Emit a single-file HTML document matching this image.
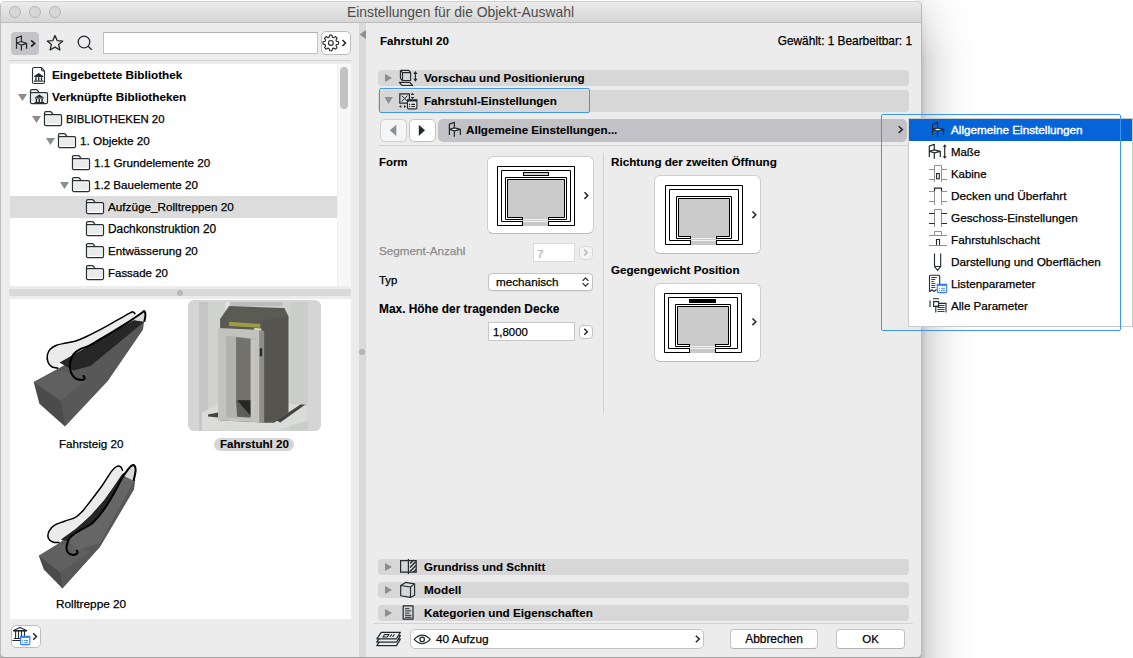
<!DOCTYPE html>
<html><head><meta charset="utf-8">
<style>
*{margin:0;padding:0;box-sizing:border-box}
html,body{width:1133px;height:658px;overflow:hidden;background:#fff;font-family:"Liberation Sans",sans-serif;color:#111}
.a{position:absolute}
.t{position:absolute;white-space:nowrap;font-size:11.7px;line-height:14px;-webkit-text-stroke:0.25px currentColor;color:#000}
.b{font-weight:bold;font-size:11.6px;-webkit-text-stroke:0.1px currentColor}
#shadow{position:absolute;left:915px;top:0;width:218px;height:658px;background:linear-gradient(to right,rgba(0,0,0,0.25),rgba(0,0,0,0.25) 6px,rgba(0,0,0,0.15) 12px,rgba(0,0,0,0.07) 26px,rgba(0,0,0,0.025) 42px,rgba(0,0,0,0) 62px);-webkit-mask-image:linear-gradient(to bottom,rgba(0,0,0,0.25),#000 60px)}
#win{position:absolute;left:0;top:0.5px;width:922px;height:657.5px;background:#ececec;border-radius:5px;overflow:hidden;border:1px solid #bdbdbd;border-top-color:#d2d2d2;border-bottom-color:#a2a2a2;border-right-color:#b8b8b8}
#root{position:absolute;left:0;top:0;width:1133px;height:658px}
#titlebar{position:absolute;left:0;top:0;width:921px;height:21px;background:linear-gradient(#ebebeb,#d6d6d6);border-bottom:1px solid #bcbcbc}
.tl{position:absolute;top:5px;width:12px;height:12px;border-radius:50%;background:#d7d7d7;border:1px solid #b6b6b6}
#title{position:absolute;left:0;width:921px;top:4px;text-align:center;font-size:13.8px;color:#4d4d4d;line-height:16px}
svg{position:absolute;overflow:visible}
.imgbtn{background:#fff;border:1px solid #cfcfcf;border-bottom-color:#bdbdbd;border-radius:6px}
.btn{background:#fff;border:1px solid #c3c3c3;border-bottom-color:#b3b3b3;border-radius:4px}
.bar{position:absolute;left:378px;width:531px;height:16px;background:#d7d7d7;border-radius:4px}
</style></head><body>
<div id="shadow"></div><div class="a" style="left:0;top:654px;width:921px;height:4px;background:#b0b0b0"></div>
<div id="win">
  <div id="titlebar"></div>
</div>
<div id="root">
  
  <div class="tl" style="left:8.5px;top:6px"></div>
  <div class="tl" style="left:28.7px;top:6px"></div>
  <div class="tl" style="left:48.9px;top:6px"></div>
  <div id="title" style="font-size:13.90px">Einstellungen für die Objekt-Auswahl</div>
<!--LEFT-->
  <!-- toolbar -->
  <div class="a" style="left:11px;top:32px;width:28px;height:23px;background:#c5c5c9;border-radius:4px"></div>
  <svg style="left:0;top:0" width="1" height="1">
    <g fill="none" stroke="#23292d" stroke-width="1.25" stroke-linejoin="round">
      <path d="M16.5 48.7V37.8L21.4 36V41.5 M16.5 43L21.4 41.5L26.6 43.3L21.4 45.2Z M21.4 45.2V50.6 M26.6 43.3V48.8"/>
    </g>
    <path d="M31.1 40.4L34.6 43.4L31.1 46.5" fill="none" stroke="#1f2326" stroke-width="1.7"/>
    <path d="M55 35.5L57.3 40.7L62.8 41.1L58.6 44.6L59.9 50L55 47.1L50.1 50L51.4 44.6L47.2 41.1L52.7 40.7Z" fill="none" stroke="#23292d" stroke-width="1.3" stroke-linejoin="round"/>
    <circle cx="84" cy="42" r="5.8" fill="none" stroke="#23292d" stroke-width="1.25"/>
    <path d="M88.2 46.2L91.8 49.8" stroke="#23292d" stroke-width="1.3"/>
  </svg>
  <div class="a" style="left:103px;top:32px;width:215px;height:22px;background:#fff;border:1px solid #c3c3c3;border-top-color:#b0b0b0"></div>
  <div class="a" style="left:321px;top:31px;width:30px;height:24px;background:#fff;border:1px solid #bdbdbd;border-radius:5px"></div>
  <svg style="left:0;top:0" width="1" height="1">
    <path d="M336.45 41.19 L338.62 41.81 L338.62 43.99 L336.45 44.61 L336.00 45.68 L337.10 47.66 L335.56 49.20 L333.58 48.10 L332.51 48.55 L331.89 50.72 L329.71 50.72 L329.09 48.55 L328.02 48.10 L326.04 49.20 L324.50 47.66 L325.60 45.68 L325.15 44.61 L322.98 43.99 L322.98 41.81 L325.15 41.19 L325.60 40.12 L324.50 38.14 L326.04 36.60 L328.02 37.70 L329.09 37.25 L329.71 35.08 L331.89 35.08 L332.51 37.25 L333.58 37.70 L335.56 36.60 L337.10 38.14 L336.00 40.12Z" fill="none" stroke="#2a2f33" stroke-width="1.15" stroke-linejoin="round"/><circle cx="330.8" cy="42.9" r="2.4" fill="none" stroke="#2a2f33" stroke-width="1.15"/>
    <path d="M342.5 40L345.5 43L342.5 46" fill="none" stroke="#1f2326" stroke-width="1.5"/>
  </svg>
  <div class="a" style="left:9px;top:60px;width:342px;height:1px;background:#d3d3d3"></div>
  <!-- list -->
  <div class="a" style="left:10px;top:64px;width:327px;height:222px;background:#fff"></div>
  <div class="a" style="left:337px;top:64px;width:14px;height:222px;background:#f7f7f7;border-left:1px solid #efefef"></div>
  <div class="a" style="left:340px;top:67px;width:8px;height:42px;background:#c2c2c2;border-radius:4px"></div>
  <div class="a" style="left:10px;top:196px;width:327px;height:22px;background:#dcdcdc"></div>
  <!--TREE-->
<svg style="left:0;top:0" width="1" height="1"><defs><g id="folder"><path d="M0.5 14V2Q0.5 0.5 2 0.5H6.2Q7 0.5 7.6 1.3L9 3.5H16.3Q17.5 3.5 17.5 5V13.3Q17.5 14.5 16.3 14.5H1.7Q0.5 14.5 0.5 13.3Z M0.5 3.5H9" fill="#fff" stroke="#263035" stroke-width="1.25"/><rect x="2.2" y="5.2" width="13.6" height="7.6" fill="#eaeaea"/></g><g id="bank" fill="#23292d"><path d="M0 3L4.5 0L9 3Z"/><rect x="0" y="3" width="9" height="1"/><rect x="1" y="4.2" width="1.4" height="3.3"/><rect x="3.8" y="4.2" width="1.4" height="3.3"/><rect x="6.6" y="4.2" width="1.4" height="3.3"/><rect x="-0.3" y="7.5" width="9.6" height="1.2"/></g></defs>
<path d="M32.5 68.5V82Q32.5 83.5 34 83.5H43Q44.5 83.5 44.5 82V71L41.5 67.5H34Q32.5 67.5 32.5 69Z M41.5 67.5V69.5Q41.5 71 43 71H44.5" fill="#fff" stroke="#2b3236" stroke-width="1.1"/><use href="#bank" x="34.2" y="73"/>
<path d="M18 94H27L22.5 101Z" fill="#8c8c8c"/>
<use href="#folder" x="30" y="89"/><use href="#bank" x="34.8" y="94.5"/>
<path d="M32 116H41L36.5 123Z" fill="#8c8c8c"/>
<use href="#folder" x="44" y="111"/>
<path d="M46 138H55L50.5 145Z" fill="#8c8c8c"/>
<use href="#folder" x="58" y="133"/>
<use href="#folder" x="72" y="155"/>
<path d="M60 182H69L64.5 189Z" fill="#8c8c8c"/>
<use href="#folder" x="72" y="177"/>
<use href="#folder" x="86" y="199"/>
<use href="#folder" x="86" y="221"/>
<use href="#folder" x="86" y="243"/>
<use href="#folder" x="86" y="265"/>
</svg>
<div class="t b" style="font-size:11.73px;left:52px;top:68px">Eingebettete Bibliothek</div>
<div class="t b" style="font-size:11.72px;left:52px;top:90px">Verknüpfte Bibliotheken</div>
<div class="t" style="font-size:11.37px;left:66px;top:112px">BIBLIOTHEKEN 20</div>
<div class="t" style="font-size:11.74px;left:80px;top:134px">1. Objekte 20</div>
<div class="t" style="font-size:11.69px;left:94px;top:156px">1.1 Grundelemente 20</div>
<div class="t" style="font-size:11.61px;left:94px;top:178px">1.2 Bauelemente 20</div>
<div class="t" style="font-size:11.73px;left:108px;top:200px">Aufzüge_Rolltreppen 20</div>
<div class="t" style="font-size:11.86px;left:108px;top:222px">Dachkonstruktion 20</div>
<div class="t" style="font-size:11.64px;left:108px;top:244px">Entwässerung 20</div>
<div class="t" style="font-size:11.48px;left:108px;top:266px">Fassade 20</div>
<!--/TREE-->
  <!-- splitter -->
  <div class="a" style="left:9px;top:289px;width:342px;height:7px;background:#d9d9d9"></div>
  <div class="a" style="left:177px;top:289.5px;width:6px;height:6px;border-radius:50%;background:#b9b9b9"></div>
  <div class="a" style="left:10px;top:299px;width:341px;height:320px;background:#fff"></div>
  <div class="a" style="left:351px;top:299px;width:8px;height:320px;background:#ececec"></div>
<!--THUMBS-->
<svg style="left:0;top:0" width="1" height="1">
 <!-- Fahrsteig -->
<g><path d="M33.7 381.9 L58.4 368.6 L142.0 320.6 L144.3 320.6 L142.9 329.7 L107.8 381.0 L65.0 426.6Z" fill="#585858"/>
<path d="M33.7 381.9 L61.2 400.9 L65.0 426.6 L39.4 403.8Z" fill="#4b4b4b"/>
<path d="M33.7 381.9 L58.4 369.6 L85.0 380.0 L61.2 400.9Z" fill="#606060"/>
<path d="M59.3 362.4 L134.4 319.8 L144.3 321.7 L90.7 365.8 L73.6 370.5Z" fill="#262626"/>
<path d="M135.33 314.12 C135.02 313.80 134.22 312.47 133.43 312.22 C132.64 311.97 133.59 311.11 130.58 312.60 C127.58 314.09 120.45 318.30 115.39 321.15 C110.32 324.00 105.25 327.00 100.19 329.70 C95.12 332.39 88.95 335.46 84.99 337.29 C81.03 339.13 79.61 339.76 76.44 340.71 C73.28 341.66 69.32 342.23 65.99 342.99 C62.67 343.75 59.09 344.26 56.50 345.27 C53.90 346.29 51.94 347.49 50.42 349.07 C48.90 350.66 47.79 352.62 47.38 354.77 C46.97 356.93 47.22 360.00 47.95 361.99 C48.68 363.99 50.00 365.70 51.75 366.74 C53.49 367.78 57.29 368.01 58.40 368.26 L59.3 362.4 L134.4 319.8Z" fill="#ebebeb"/>
<path d="M134.4 320.2 L141.6 313.0 L144.3 311.1 L145.4 315.4 L144.3 321.7Z" fill="#d9d9d9"/>
<path d="M58.40 368.26 C57.29 368.01 53.49 367.78 51.75 366.74 C50.00 365.70 48.68 363.99 47.95 361.99 C47.22 360.00 46.97 356.93 47.38 354.77 C47.79 352.62 48.90 350.66 50.42 349.07 C51.94 347.49 53.90 346.29 56.50 345.27 C59.09 344.26 62.67 343.75 65.99 342.99 C69.32 342.23 73.28 341.66 76.44 340.71 C79.61 339.76 81.03 339.13 84.99 337.29 C88.95 335.46 95.12 332.39 100.19 329.70 C105.25 327.00 110.32 324.00 115.39 321.15 C120.45 318.30 127.58 314.09 130.58 312.60 C133.59 311.11 132.64 311.97 133.43 312.22 C134.22 312.47 135.02 313.80 135.33 314.12" fill="none" stroke="#000" stroke-width="1.5"/>
<path d="M144.26 321.72 C144.45 320.67 145.40 317.22 145.40 315.45 C145.40 313.68 144.89 311.49 144.26 311.08 C143.63 310.67 143.88 311.40 141.60 312.98 C139.32 314.56 134.95 317.73 130.58 320.58 C126.21 323.43 120.45 326.97 115.39 330.08 C110.32 333.18 104.62 336.57 100.19 339.19 C95.76 341.82 92.11 344.20 88.79 345.84 C85.47 347.49 82.77 347.71 80.24 349.07 C77.71 350.43 75.27 351.86 73.59 354.01 C71.91 356.17 70.65 359.08 70.17 361.99 C69.70 364.90 69.92 368.80 70.74 371.49 C71.57 374.18 73.21 376.71 75.11 378.14 C77.01 379.56 80.56 380.04 82.14 380.04 C83.72 380.04 84.45 378.93 84.61 378.14 C84.77 377.35 83.34 375.76 83.09 375.29" fill="none" stroke="#000" stroke-width="2"/></g>
 <!-- Rolltreppe -->
<g><path d="M38.8 555.8 L59.6 543.0 L131.6 478.8 L135.2 480.2 L134.0 489.6 L100.0 546.9 L62.5 588.4Z" fill="#585858"/>
<path d="M38.8 555.8 L60.5 572.6 L62.5 588.4 L43.8 569.6Z" fill="#4b4b4b"/>
<path d="M38.8 555.8 L59.6 543.0 L90.2 551.8 L60.5 572.6Z" fill="#606060"/>
<path d="M67.5 541.0 L70.4 537.0 L80.3 530.1 L92.1 523.2 L104.0 509.4 L113.9 493.6 L122.7 478.8 L128.7 469.9 L134.0 480.8 L100.0 543.0 L77.3 549.9Z" fill="#666666"/>
<path d="M60.5 539.4 L76.3 528.2 L90.2 515.7 L104.0 499.9 L113.9 486.1 L121.8 474.2 L128.7 469.9 L122.7 478.8 L113.9 493.6 L104.0 509.4 L92.1 523.2 L80.3 530.1 L70.4 537.0 L67.5 541.0Z" fill="#262626"/>
<path d="M122.75 470.89 C122.42 470.23 121.76 467.69 120.77 466.94 C119.79 466.18 118.31 465.69 116.82 466.34 C115.34 467.00 114.36 467.66 111.89 470.89 C109.42 474.11 105.63 480.60 102.01 485.70 C98.39 490.80 93.46 497.22 90.17 501.49 C86.87 505.77 84.74 508.74 82.27 511.37 C79.80 514.00 78.32 515.65 75.36 517.29 C72.39 518.94 67.95 519.93 64.49 521.24 C61.04 522.56 57.19 523.55 54.62 525.19 C52.05 526.84 50.14 528.98 49.09 531.12 C48.04 533.25 47.71 536.22 48.30 538.03 C48.89 539.84 50.77 541.22 52.65 541.98 C54.52 542.73 58.41 542.47 59.56 542.57 L59.6 542.6 L60.5 539.4 L76.3 528.2 L90.2 515.7 L104.0 499.9 L113.9 486.1 L121.8 474.2Z" fill="#ebebeb"/>
<path d="M123.7 475.8 L127.7 469.9 L131.6 465.6 L135.6 470.9 L133.6 480.8Z" fill="#d9d9d9"/>
<path d="M59.56 542.57 C58.41 542.47 54.52 542.73 52.65 541.98 C50.77 541.22 48.89 539.84 48.30 538.03 C47.71 536.22 48.04 533.25 49.09 531.12 C50.14 528.98 52.05 526.84 54.62 525.19 C57.19 523.55 61.04 522.56 64.49 521.24 C67.95 519.93 72.39 518.94 75.36 517.29 C78.32 515.65 79.80 514.00 82.27 511.37 C84.74 508.74 86.87 505.77 90.17 501.49 C93.46 497.22 98.39 490.80 102.01 485.70 C105.63 480.60 109.42 474.11 111.89 470.89 C114.36 467.66 115.34 467.00 116.82 466.34 C118.31 465.69 119.79 466.18 120.77 466.94 C121.76 467.69 122.42 470.23 122.75 470.89" fill="none" stroke="#000" stroke-width="1.5"/>
<path d="M133.61 480.76 C133.94 479.11 135.42 473.35 135.58 470.89 C135.75 468.42 135.26 466.84 134.60 465.95 C133.94 465.06 132.79 464.90 131.64 465.55 C130.48 466.21 129.33 467.69 127.69 469.90 C126.04 472.10 124.07 474.84 121.76 478.79 C119.46 482.73 116.82 488.49 113.86 493.60 C110.90 498.70 107.61 504.46 103.99 509.39 C100.37 514.33 96.09 519.76 92.14 523.22 C88.19 526.67 83.91 527.82 80.29 530.13 C76.67 532.43 72.66 534.57 70.42 537.04 C68.18 539.51 67.36 542.47 66.86 544.94 C66.37 547.41 66.54 550.20 67.46 551.85 C68.38 553.50 70.75 554.58 72.39 554.81 C74.04 555.04 76.61 554.06 77.33 553.23 C78.05 552.41 76.84 550.43 76.74 549.88" fill="none" stroke="#000" stroke-width="2"/></g>
</svg>
<!-- Fahrstuhl photo -->
<div class="a" style="left:188px;top:300px;width:133px;height:131px;background:#d5d5d5;border-radius:6px"></div>
<svg style="left:0;top:0" width="1" height="1">
<rect x="199" y="302" width="109" height="128.5" fill="#cfd2cf"/>
<path d="M199.0 302.0 L208.0 302.0 L208.0 430.4 L199.0 430.4Z" fill="#c4c7c4"/>
<path d="M225.1 302.0 L230.1 302.0 L230.1 430.4 L225.1 430.4Z" fill="#dfe2df"/>
<path d="M290.3 302.0 L307.4 302.0 L307.4 430.4 L290.3 430.4Z" fill="#cacdca"/>
<path d="M230.1 302.0 L282.3 302.0 L282.3 306.0 L230.1 306.0Z" fill="#babdba"/>
<path d="M202.0 412.4 L218.1 404.4 L290.3 403.4 L307.4 406.4 L307.4 420.4 L276.3 430.4 L202.0 430.4Z" fill="#dadcda"/>
<path d="M208.0 414.4 L218.1 412.4 L218.1 417.4 L208.0 416.4Z" fill="#444"/>
<path d="M276.3 420.4 L300.4 404.4 L305.4 404.4 L280.3 422.4Z" fill="#444"/>
<path d="M220.1 319.1 L229.1 306.0 L284.3 308.0 L288.3 316.1 L288.3 412.4 L274.3 422.4 L262.2 422.4 L220.1 420.4Z" fill="#5b5a53"/>
<path d="M262.2 320.1 L288.3 316.1 L288.3 412.4 L274.3 422.4 L262.2 422.4Z" fill="#55544e"/>
<path d="M229.1 321.7 L260.2 324.1 L260.2 327.7 L229.1 326.1Z" fill="#9a9d42"/>
<path d="M254.2 328.1 L261.2 328.5 L261.2 331.1 L254.2 330.7Z" fill="#e0e0c8"/>
<path d="M218.1 328.1 L262.2 330.1 L263.2 422.4 L218.1 420.4Z" fill="#c2c2be"/>
<path d="M259.2 330.1 L264.2 331.1 L264.2 422.4 L259.2 422.4Z" fill="#8e8d88"/>
<path d="M226.1 335.7 L256.2 338.5 L256.2 418.4 L226.1 417.4Z" fill="#b2b2ae"/>
<path d="M236.1 337.1 L251.2 339.1 L251.2 400.3 L236.1 400.3Z" fill="#73716b"/>
<path d="M236.1 400.3 L251.2 400.3 L251.2 417.4 L237.1 416.8Z" fill="#5e5d59"/>
<path d="M237.1 400.3 L251.2 400.3 L251.2 416.4Z" fill="#262626"/>
<path d="M250.6 339.1 L255.8 339.7 L255.8 418.4 L250.6 418.0Z" fill="#c4c4c0"/>
<path d="M259.8 348.2 L262.2 348.2 L262.2 356.2 L259.8 356.2Z" fill="#2a2a2a"/>
</svg>
<div class="t b" style="left:214px;top:438px;width:80px;height:13px;background:#d5d5d5;border-radius:7px"></div>
<div class="t b" style="font-size:11.58px;left:220px;top:437px">Fahrstuhl 20</div>
<div class="t" style="font-size:11.59px;left:59px;top:437px">Fahrsteig 20</div>
<div class="t" style="font-size:11.80px;left:56px;top:597px">Rolltreppe 20</div>
<!--/THUMBS-->
  <!-- vertical splitter -->
  <div class="a" style="left:359px;top:23px;width:7px;height:634px;background:#d9d9d9"></div>
  <svg style="left:0;top:0" width="1" height="1"><path d="M359.5 34.5L366 30V39Z" fill="#8e8e8e"/></svg>
  <div class="a" style="left:359px;top:349px;width:6px;height:6px;border-radius:50%;background:#bababa;border:0.5px solid #aaa"></div>
  <!-- bottom lib button -->
  <div class="a" style="left:11px;top:624.5px;width:30px;height:23px;background:#fff;border:1px solid #bdbdbd;border-radius:5px"></div>
<!--RIGHT-->
  <div class="t b" style="font-size:11.58px;left:380px;top:34px">Fahrstuhl 20</div>
  <div class="t" style="font-size:11.85px;left:777px;top:34px;width:135px;text-align:right">Gewählt: 1 Bearbeitbar: 1</div>
  <!-- section bars -->
  <div class="bar" style="top:70px;height:16px"></div>
  <div class="bar" style="top:90px;height:22px"></div>
  <div class="a" style="left:379px;top:88px;width:211px;height:25px;border:1.5px solid #3d95f7;border-radius:2px"></div>
  <svg style="left:0;top:0" width="1" height="1">
    <path d="M385 74V82L392 78Z" fill="#8e8e8e"/>
    <path d="M384.5 97H392.8L388.6 104Z" fill="#8e8e8e"/>
  </svg>
  <div class="t b" style="font-size:11.58px;left:424px;top:71px">Vorschau und Positionierung</div>
  <div class="t b" style="font-size:11.62px;left:424px;top:94px">Fahrstuhl-Einstellungen</div>
  <!-- nav -->
  <div class="a" style="left:379.5px;top:118.5px;width:27.5px;height:23px;background:#f5f5f5;border:1px solid #d0d0d0;border-radius:5px"></div>
  <div class="a" style="left:408.5px;top:118.5px;width:27.6px;height:23px;background:#fff;border:1px solid #c2c2c2;border-radius:5px"></div>
  <svg style="left:0;top:0" width="1" height="1">
    <path d="M396.3 124.8V135.9L389.8 130.35Z" fill="#8a8e90"/>
    <path d="M418.8 124.8V135.9L425 130.35Z" fill="#23292d"/>
  </svg>
  <div class="a" style="left:438px;top:119px;width:469px;height:23px;background:#c2c2c6;border-radius:5px"></div>
  <div class="t b" style="font-size:11.65px;left:466px;top:123px">Allgemeine Einstellungen...</div>
  <svg style="left:0;top:0" width="1" height="1"><path d="M898.8 126.3L902.3 129.6L898.8 132.9" fill="none" stroke="#23292d" stroke-width="1.5"/></svg>
  <div class="a" style="left:379px;top:145px;width:530px;height:1px;background:#d2d2d2"></div>
  <!-- column separator -->
  <div class="a" style="left:603px;top:153px;width:1px;height:260px;background:#d2d2d2"></div>
  <!-- Form -->
  <div class="t b" style="font-size:11.42px;left:379px;top:155px">Form</div>
  <div class="a imgbtn" style="left:487px;top:156px;width:107px;height:78px"></div>
  <div class="t" style="font-size:11.69px;left:379px;top:244px;color:#8b8b8b">Segment-Anzahl</div>
  <div class="a" style="left:533px;top:243px;width:42px;height:19px;background:#fff;border:1px solid #dadada"></div>
  <div class="t" style="left:537px;top:247px;color:#b5b5b5">7</div>
  <div class="a" style="left:578.5px;top:245.5px;width:14px;height:14px;background:#f4f4f4;border:1px solid #d9d9d9;border-radius:4px"></div>
  <div class="t" style="font-size:11.40px;left:379px;top:273px">Typ</div>
  <div class="a" style="left:488px;top:273px;width:105px;height:18px;background:#fff;border:1px solid #c3c3c3;border-radius:4px;box-shadow:0 0.5px 0.5px rgba(0,0,0,0.1)"></div>
  <div class="t" style="font-size:11.71px;left:496px;top:275px">mechanisch</div>
  <div class="t b" style="font-size:11.90px;left:379px;top:302px">Max. Höhe der tragenden Decke</div>
  <div class="a" style="left:488px;top:322px;width:87px;height:19px;background:#fff;border:1px solid #c6c6c6"></div>
  <div class="t" style="font-size:11.40px;left:493px;top:325px">1,8000</div>
  <div class="a" style="left:578.5px;top:325px;width:14px;height:14px;background:#fff;border:1px solid #c3c3c3;border-radius:4px"></div>
  <!-- right column -->
  <div class="t b" style="font-size:11.67px;left:611px;top:155px">Richtung der zweiten Öffnung</div>
  <div class="a imgbtn" style="left:654px;top:175px;width:107px;height:79px"></div>
  <div class="t b" style="font-size:11.64px;left:611px;top:263px">Gegengewicht Position</div>
  <div class="a imgbtn" style="left:654px;top:283px;width:107px;height:79px"></div>
  <!-- bottom bars -->
  <div class="bar" style="top:559px;height:16px"></div>
  <div class="bar" style="top:582px;height:16px"></div>
  <div class="bar" style="top:605px;height:16px"></div>
  <svg style="left:0;top:0" width="1" height="1">
    <path d="M385 563V571L392 567Z" fill="#8e8e8e"/>
    <path d="M385 586V594L392 590Z" fill="#8e8e8e"/>
    <path d="M385 609V617L392 613Z" fill="#8e8e8e"/>
  </svg>
  <div class="t b" style="font-size:11.49px;left:424px;top:560px">Grundriss und Schnitt</div>
  <div class="t b" style="font-size:11.79px;left:424px;top:583px">Modell</div>
  <div class="t b" style="font-size:11.69px;left:424px;top:606px">Kategorien und Eigenschaften</div>
  <div class="a" style="left:374px;top:623px;width:539px;height:1px;background:#d2d2d2"></div>
  <!-- footer -->
  <div class="a" style="left:410px;top:629px;width:294px;height:20px;background:#fff;border:1px solid #c3c3c3;border-radius:5px"></div>
  <div class="t" style="font-size:11.82px;left:436px;top:632px">40 Aufzug</div>
  <svg style="left:0;top:0" width="1" height="1"><path d="M695.8 635.7L699.3 639L695.8 642.3" fill="none" stroke="#23292d" stroke-width="1.5"/></svg>
  <div class="a btn" style="left:730px;top:629px;width:88px;height:20px"></div>
  <div class="t" style="font-size:11.92px;left:730px;top:632px;width:88px;text-align:center">Abbrechen</div>
  <div class="a btn" style="left:836px;top:629px;width:69px;height:20px"></div>
  <div class="t" style="font-size:11.40px;left:836px;top:632px;width:69px;text-align:center">OK</div>
<!--ICONS-->
<svg style="left:0;top:0" width="1" height="1">
 <defs>
  <g id="chair" fill="none" stroke="#23292d" stroke-width="1.2" stroke-linejoin="round">
   <path d="M0 12.7V1.8L5 0V5.8 M0 7L5 5.6L11 7L5 8.6Z M5 8.6V14.4 M11 7V12.6"/>
  </g>
 </defs>
 <!-- Vorschau icon -->
 <g fill="none" stroke="#23292d" stroke-width="1.15" stroke-linejoin="round">
  <path d="M402.5 72.6H410.6V80.5H402.5Z M400.4 70.4H408.8L410.6 72.6 M400.4 70.4V78.6L402.5 80.5 M400.4 70.4L402.5 72.6"/>
  <path d="M399.3 82.4H409.7L412.6 85.5H402.1Z"/>
  <path d="M415.4 72.5V80.5"/>
 </g>
 <path d="M413.3 74L415.4 71L417.5 74Z M413.3 78.8L415.4 81.8L417.5 78.8Z" fill="#23292d"/>
 <!-- Fahrstuhl-Einstellungen icon -->
 <g fill="none" stroke="#23292d" stroke-width="1.2">
  <path d="M399.8 93.8H409.4V103.2H399.8Z"/>
  <path d="M401.7 95.7L407.5 101.3 M407.5 95.7L401.7 101.3" stroke-width="1"/>
 </g>
 <path d="M407.5 99.9H416.9V107.8Q416.9 108.8 415.9 108.8H408.5Q407.5 108.8 407.5 107.8Z" fill="#e8e8e8" stroke="#23292d" stroke-width="1.15"/>
 <rect x="407.5" y="99.8" width="9.4" height="1.7" fill="#23292d"/>
 <path d="M409 104.4h1.2 M411.3 104.4h3.7 M409 106.5h1.2 M411.3 106.5h3.7" stroke="#23292d" stroke-width="1.1"/>
 <path d="M410.7 95L412.5 92.8L414.3 95Z M410.7 97L412.5 99.2L414.3 97Z M401.3 104.9V108L399 106.45Z M404 104.9V108L406.3 106.45Z" fill="#23292d"/>
 <!-- popup chair -->
 <path d="M449.4 129.3L454.6 128.2L460.6 129.3L454.6 130.8Z" fill="#fff"/>
 <use href="#chair" x="449.4" y="122.3"/>
 <!-- Grundriss icon -->
 <path d="M410.2 563.5L413.8 559.9 M410 567.5L416 561.5 M410 571.5L416 565.5 M413.5 572L416 569.5" stroke="#23292d" stroke-width="1.3"/>
 <g fill="none" stroke="#23292d" stroke-width="1.2">
  <path d="M400.6 560.6H416.2V572.2H400.6Z"/>
  <path d="M408.4 559V574"/>
 </g>
 <!-- Modell icon -->
 <g fill="none" stroke="#23292d" stroke-width="1.15" stroke-linejoin="round">
  <path d="M400.7 585.5L405.8 582.4L414.6 583.9V595.3L410.5 597.4L400.7 595.8Z M400.7 585.5L410.5 587L414.6 583.9 M410.5 587V597.4"/>
 </g>
 <!-- Kategorien icon -->
 <path d="M403.2 605.8H413V619.2H403.2Z" fill="none" stroke="#23292d" stroke-width="1.2" stroke-linejoin="round"/>
 <path d="M405 608.7h4.5 M405 610.9h6.3 M405 613.1h4.5 M405 615.3h6.3 M405 617.3h6.3" stroke="#23292d" stroke-width="1"/>
 <!-- layers icon -->
 <g fill="#ececec" stroke="#23292d" stroke-width="1.25" stroke-linejoin="round">
  <path d="M376.8 645.6L381.3 639H400.4L396.5 645.6Z"/>
  <path d="M376.8 642.2L381.3 635.6H400.4L396.5 642.2Z"/>
  <path d="M376.8 638.8L381.3 632.3H400.4L396.5 638.8Z"/>
 </g>
 <path d="M383 637L384.6 634.5H388.8L387.2 637Z" fill="none" stroke="#23292d" stroke-width="1.1"/>
 <path d="M390 637L391.8 634.4 M392.6 637L394.4 634.4" stroke="#23292d" stroke-width="1.1"/>
 <!-- eye -->
 <path d="M414.2 639.4Q422.2 630.8 430.2 639.4Q422.2 648 414.2 639.4Z" fill="none" stroke="#23292d" stroke-width="1.1"/>
 <circle cx="422.2" cy="639.4" r="2.2" fill="none" stroke="#23292d" stroke-width="1.3"/>
 <!-- bottom lib button icon -->
 <path d="M13.5 630.6L20 627.4L26.6 630.6Z" fill="#fff" stroke="#23292d" stroke-width="1.1" stroke-linejoin="round"/>
 <path d="M13.2 630.8H26.8" stroke="#23292d" stroke-width="1.3"/>
 <path d="M15.6 631V638.3 M18.5 631V638.3 M21.5 631V636 M24.5 631V636" stroke="#23292d" stroke-width="1.1"/>
 <path d="M13.8 638.5H20.5 M12.3 640.5H20.5" stroke="#23292d" stroke-width="1.1"/>
 <path d="M20.6 636.3H29.8V643.8Q29.8 644.6 29 644.6H21.4Q20.6 644.6 20.6 643.8Z" fill="#fff" stroke="#2f7cf6" stroke-width="1.1"/>
 <rect x="20.6" y="636" width="9.2" height="1.9" fill="#2f7cf6"/>
 <path d="M22 640.5h0.9 M24.2 640.5h3.8 M22 642.6h0.9 M24.2 642.6h3.8" stroke="#2f7cf6" stroke-width="0.9"/>
 <path d="M33.2 633.3L36.5 636.5L33.2 639.7" fill="none" stroke="#23292d" stroke-width="1.5"/>
</svg>
<!--/ICONS-->
<!--DIAG-->
<svg style="left:0;top:0" width="1" height="1">
<path d="M522 225.5H497.5V166.5H574.5V225.5H549 M522 221.5H501.5V170.5H570.5V221.5H549" fill="none" stroke="#000" stroke-width="1"/><rect x="507" y="179" width="58" height="39" fill="#cbcbcb"/><rect x="522" y="217" width="27" height="9" fill="#c8c8c8"/><path d="M522 219.5H549 M522 221.5H549" stroke="#f4f4f4" stroke-width="1"/><path d="M522 219.5H505.5V177.5H566.5V219.5H549 M522 217.5H507.5V179.5H564.5V217.5H549" fill="none" stroke="#000" stroke-width="1"/><path d="M522.5 221V226 M548.5 221V226 M522.5 217V220 M548.5 217V220" stroke="#000" stroke-width="1"/><rect x="523.5" y="172.5" width="25" height="3" fill="#cdcdcd" stroke="#000" stroke-width="1"/>
<path d="M690 244.5H665.5V185.5H742.5V244.5H717 M690 240.5H669.5V189.5H738.5V240.5H717" fill="none" stroke="#000" stroke-width="1"/><rect x="678" y="198" width="52" height="39" fill="#cbcbcb"/><rect x="690" y="236" width="27" height="9" fill="#c8c8c8"/><path d="M690 238.5H717 M690 240.5H717" stroke="#f4f4f4" stroke-width="1"/><path d="M690 238.5H676.5V196.5H731.5V238.5H717 M690 236.5H678.5V198.5H729.5V236.5H717" fill="none" stroke="#000" stroke-width="1"/><path d="M690.5 240V245 M716.5 240V245 M690.5 236V239 M716.5 236V239" stroke="#000" stroke-width="1"/>
<path d="M689 352.5H664.5V293.5H741.5V352.5H716 M689 348.5H668.5V297.5H737.5V348.5H716" fill="none" stroke="#000" stroke-width="1"/><rect x="677" y="306" width="52" height="39" fill="#cbcbcb"/><rect x="689" y="344" width="27" height="9" fill="#c8c8c8"/><path d="M689 346.5H716 M689 348.5H716" stroke="#f4f4f4" stroke-width="1"/><path d="M689 346.5H675.5V304.5H730.5V346.5H716 M689 344.5H677.5V306.5H728.5V344.5H716" fill="none" stroke="#000" stroke-width="1"/><path d="M689.5 348V353 M715.5 348V353 M689.5 344V347 M715.5 344V347" stroke="#000" stroke-width="1"/><rect x="689" y="299" width="27" height="4" fill="#000"/>
<path d="M584.5 192.3L587.8 195.60000000000002L584.5 198.9" fill="none" stroke="#23292d" stroke-width="1.5"/>
<path d="M752.5 211.5L755.8 214.8L752.5 218.1" fill="none" stroke="#23292d" stroke-width="1.5"/>
<path d="M752.5 318.5L755.8 321.8L752.5 325.1" fill="none" stroke="#23292d" stroke-width="1.5"/>
<path d="M584.3 249.5L587.3 252.5L584.3 255.5" fill="none" stroke="#b0b0b0" stroke-width="1.3"/>
<path d="M584.3 328.8L587.3 331.8L584.3 334.8" fill="none" stroke="#23292d" stroke-width="1.5"/>
<path d="M582.6 280.8L585.5 277.9L588.4 280.8 M582.6 283.2L585.5 286.1L588.4 283.2" fill="none" stroke="#23292d" stroke-width="1.2"/>
</svg>
<!--/DIAG-->
<!--MENU-->
  <div class="a" style="left:908px;top:118px;width:225px;height:209px;background:#fff;border:1px solid #cacaca"></div>
  <div class="a" style="left:909px;top:119px;width:223px;height:22px;background:#0564d8"></div>
  <div class="t" style="font-size:11.73px;left:951px;top:123px;color:#fff;-webkit-text-stroke:0.4px #fff">Allgemeine Einstellungen</div>
  <div class="t" style="font-size:11.40px;left:951px;top:145px">Maße</div>
  <div class="t" style="font-size:11.40px;left:951px;top:167px">Kabine</div>
  <div class="t" style="font-size:11.81px;left:951px;top:189px">Decken und Überfahrt</div>
  <div class="t" style="font-size:11.78px;left:951px;top:211px">Geschoss-Einstellungen</div>
  <div class="t" style="font-size:11.70px;left:951px;top:233px">Fahrstuhlschacht</div>
  <div class="t" style="font-size:11.78px;left:951px;top:255px">Darstellung und Oberflächen</div>
  <div class="t" style="font-size:11.69px;left:951px;top:277px">Listenparameter</div>
  <div class="t" style="font-size:11.61px;left:951px;top:299px">Alle Parameter</div>
  <div class="a" style="left:881px;top:114px;width:240px;height:217px;border:1.5px solid #3d95f7;border-radius:2px"></div>
<svg style="left:0;top:0" width="1" height="1">
 <path d="M932.6 129.4L937.6 128.2L943.6 129.4L937.6 130.9Z" fill="#fff"/>
 <use href="#chair" x="932.6" y="122.4"/>
 <path d="M929.3 151.3L934.3 150.1L940.3 151.3L934.3 152.8Z" fill="#fff"/>
 <use href="#chair" x="929.3" y="144.3"/>
 <path d="M944.7 145.5V157.5" stroke="#23292d" stroke-width="1.2"/>
 <path d="M942.7 146.8L944.7 144.2L946.7 146.8Z M942.7 156.2L944.7 158.8L946.7 156.2Z" fill="#23292d"/>
 <!-- Kabine -->
 <g fill="none" stroke="#8f8f8f" stroke-width="1">
  <path d="M934.5 182V165.5H941.5V182 M929 169.5H934.5 M941.5 169.5H947 M929 179.5H934.5 M941.5 179.5H947"/>
 </g>
 <rect x="936.6" y="173.5" width="2.7" height="5.3" fill="none" stroke="#23292d" stroke-width="1.1"/>
 <!-- Decken -->
 <g fill="none" stroke="#8f8f8f" stroke-width="1">
  <path d="M934.5 190V205 M941.5 190V205 M929 191.5H934.5 M941.5 191.5H947 M929 201.5H934.5 M941.5 201.5H947"/>
 </g>
 <path d="M934.5 191V188.2H941.5V191" fill="none" stroke="#23292d" stroke-width="1.2"/>
 <!-- Geschoss -->
 <path d="M934.5 227V209.5H941.5V227" fill="none" stroke="#8f8f8f" stroke-width="1"/>
 <path d="M929 213.5H934.5 M941.5 213.5H947 M929 223.5H934.5 M941.5 223.5H947" stroke="#23292d" stroke-width="1.1"/>
 <!-- Schacht -->
 <path d="M934.5 235.3V231.5H941.5V235.3 M929 235.5H947 M929 245.5H947" fill="none" stroke="#8f8f8f" stroke-width="1"/>
 <path d="M936.5 245V239.5H939.5V245" fill="none" stroke="#23292d" stroke-width="1.1"/>
 <!-- pen -->
 <path d="M934.5 253.4V266.5L937.6 270.4L940.7 266.5V253.4 M934.5 266.5H940.7" fill="none" stroke="#23292d" stroke-width="1.1"/>
 <!-- Listenparameter -->
 <path d="M929.5 291.8V276.2Q929.5 275.2 930.5 275.2H938.7Q939.7 275.2 939.7 276.2V284 M929.5 291.8L932 289.8L934 291.5L936.5 289.5" fill="none" stroke="#23292d" stroke-width="1.1"/>
 <path d="M931.3 277.5h5.5 M931.3 279.5h4 M931.3 281.5h2.5 M931.3 283.5h4 M931.3 285.5h4 M931.3 287.5h4" stroke="#23292d" stroke-width="0.9"/>
 <path d="M937.3 284.3H946.7V291.6Q946.7 292.6 945.7 292.6H938.3Q937.3 292.6 937.3 291.6Z" fill="#fff" stroke="#2f7cf6" stroke-width="1.1"/>
 <rect x="937.3" y="284" width="9.4" height="1.9" fill="#2f7cf6"/>
 <path d="M939 288.3h1 M941 288.3h4 M939 290.4h1 M941 290.4h4" stroke="#2f7cf6" stroke-width="0.9"/>
 <!-- Alle Parameter -->
 <path d="M933 298.8H939 M930 300.5V307 M933.6 301.6H938.6V306.4H933.6Z M935.8 306.5V312.5 M938.6 303.4H946V312.5" fill="none" stroke="#23292d" stroke-width="1.1"/>
 <path d="M937.5 305.5h7 M937.5 307.5h7 M937.5 309.5h7 M937.5 311.5h7" stroke="#23292d" stroke-width="0.9"/>
</svg>
<!--/MENU-->
</div>
</body></html>
